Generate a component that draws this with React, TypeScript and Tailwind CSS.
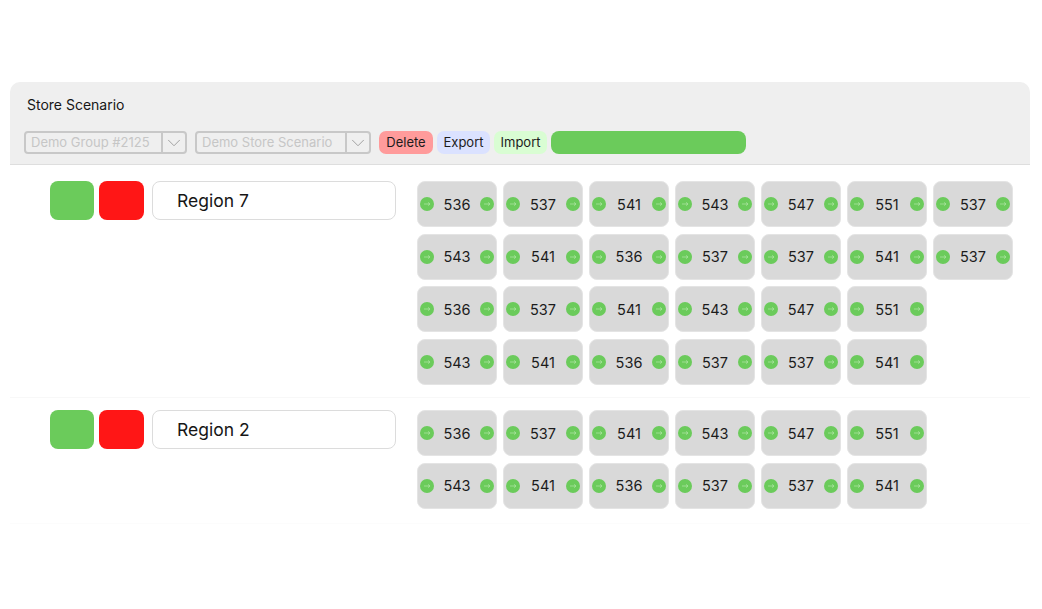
import React from 'react';
import { ChevronDown } from 'lucide-react';

const regions = [
    {
        name: 'Region 7',
        stores: [
            536, 537, 541, 543, 547, 551, 537,
            543, 541, 536, 537, 537, 541, 537,
            536, 537, 541, 543, 547, 551, 0,
            543, 541, 536, 537, 537, 541, 0,
        ],
    },
    {
        name: 'Region 2',
        stores: [
            536, 537, 541, 543, 547, 551, 0,
            543, 541, 536, 537, 537, 541, 0,
        ],
    },
];

const Dot = () => (
    <span className="w-[14px] h-[14px] rounded-full bg-[#6bcb5b] flex items-center justify-center shrink-0">
        <svg width="8" height="8" viewBox="0 0 8 8" fill="none" stroke="#a9e29f" strokeWidth="0.8">
            <path d="M1 4h6M5 2.4 7 4 5 5.6" />
        </svg>
    </span>
);

const StoreCard = ({ id }: { id: number }) => (
    <div className="w-[80px] h-[46px] rounded-[8px] bg-[#d9d9d9] border border-[#e4e4e4] flex items-center justify-between px-[2px] text-[14.5px] text-[#1c1c1c]">
        <Dot />
        <span className="pt-[1px]">{id}</span>
        <Dot />
    </div>
);

const DemoSelect = ({ label, width }: { label: string; width: string }) => (
    <div className={`${width} h-[23px] flex border-2 border-[#c8c8c8] rounded-[4px] text-[13px] text-[#c6c6c6] leading-none`}>
        <div className="flex-1 flex items-center pl-[5px] whitespace-nowrap overflow-hidden">{label}</div>
        <div className="w-[24px] border-l-2 border-[#c8c8c8] flex items-center justify-center">
            <ChevronDown size={26} strokeWidth={1} color="#9a9a9a" />
        </div>
    </div>
);

const RegionRow = ({ region, last }: { region: (typeof regions)[number]; last: boolean }) => (
    <div className={`flex pl-[40px] ${last ? 'pt-[12px] pb-[14px] border-b border-[#fcfcfc]' : 'pt-[16px] pb-[12px] border-b border-[#f8f8f8]'}`}>
        <div className="flex gap-[5px] w-[367px] shrink-0 items-start">
            <div className="w-[44px] h-[39px] rounded-[8px] bg-[#6bcb5b]" />
            <div className="w-[45px] h-[39px] rounded-[8px] bg-[#ff1616]" />
            <div className="ml-[3px] w-[244px] h-[39px] rounded-[8px] bg-white border border-[#dcdcdc] flex items-center pl-[24px] pt-[1px] text-[17.5px] text-[#161616]">
                {region.name}
            </div>
        </div>
        <div className="grid grid-cols-[repeat(7,80px)] gap-x-[6px] gap-y-[6.67px]">
            {region.stores.map((id, i) => (id ? <StoreCard key={i} id={id} /> : <div key={i} />))}
        </div>
    </div>
);

const App = () => {
    return (
        <div className="w-[1042px] h-[609px] bg-white pt-[82px] px-[10px] overflow-hidden font-['Inter',sans-serif]">
            <div className="w-[1020px]">
                {/* Header */}
                <div className="h-[83px] bg-[#efefef] rounded-t-[10px] border-b border-[#dedede] pl-[14px] pt-[15px]">
                    <div className="pl-[3px] text-[14px] leading-[16px] text-[#161616]">Store Scenario</div>
                    <div className="mt-[18px] flex items-center">
                        <DemoSelect label="Demo Group #2125" width="w-[163px]" />
                        <div className="w-[8px]" />
                        <DemoSelect label="Demo Store Scenario" width="w-[176px]" />
                        <button className="ml-[8px] h-[23px] w-[54px] rounded-[7px] bg-[#ff9b9b] text-[13px] text-[#1c1c1c]">Delete</button>
                        <button className="ml-[4px] h-[23px] w-[53px] rounded-[7px] bg-[#dbe2ff] text-[13px] text-[#1c1c1c]">Export</button>
                        <button className="ml-[4px] h-[23px] w-[53px] rounded-[7px] bg-[#d9fdd3] text-[13px] text-[#1c1c1c]">Import</button>
                        <div className="ml-[4px] h-[23px] w-[195px] rounded-[8px] bg-[#6bcb5b]" />
                    </div>
                </div>

                {regions.map((region, i) => (
                    <RegionRow key={region.name} region={region} last={i === regions.length - 1} />
                ))}
            </div>
        </div>
    );
};

export default App;
